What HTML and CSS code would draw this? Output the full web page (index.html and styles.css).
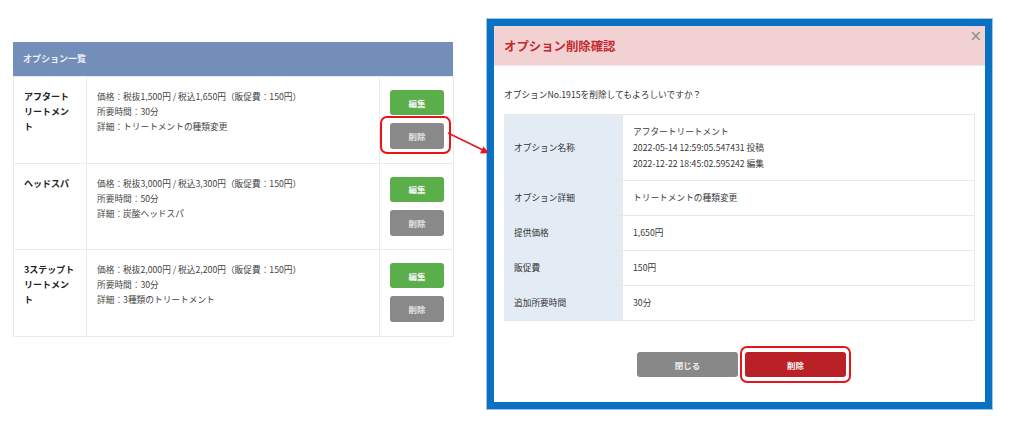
FILE: index.html
```html
<!DOCTYPE html>
<html lang="ja">
<head>
    <meta charset="UTF-8">
    <meta name="viewport" content="width=device-width, initial-scale=1.0">
    <title>オプション削除確認</title>
    <link rel="stylesheet" href="styles.css">
</head>
<body>
    <div class="page">
        <section class="option-list">
            <div class="list-head">オプション一覧</div>
            <table class="list-table">
                <tr>
                    <th class="col-name">アフタートリートメント</th>
                    <td class="col-detail">
                        価格：税抜1,500円 / 税込1,650円（販促費：150円）<br>
                        所要時間：30分<br>
                        詳細：トリートメントの種類変更
                    </td>
                    <td class="col-action">
                        <button class="btn btn-edit">編集</button>
                        <button class="btn btn-delete marked-left">削除</button>
                    </td>
                </tr>
                <tr>
                    <th class="col-name">ヘッドスパ</th>
                    <td class="col-detail">
                        価格：税抜3,000円 / 税込3,300円（販促費：150円）<br>
                        所要時間：50分<br>
                        詳細：炭酸ヘッドスパ
                    </td>
                    <td class="col-action">
                        <button class="btn btn-edit">編集</button>
                        <button class="btn btn-delete">削除</button>
                    </td>
                </tr>
                <tr>
                    <th class="col-name">3ステップトリートメント</th>
                    <td class="col-detail">
                        価格：税抜2,000円 / 税込2,200円（販促費：150円）<br>
                        所要時間：30分<br>
                        詳細：3種類のトリートメント
                    </td>
                    <td class="col-action">
                        <button class="btn btn-edit">編集</button>
                        <button class="btn btn-delete">削除</button>
                    </td>
                </tr>
            </table>
        </section>

        <div class="modal">
            <div class="modal-inner">
                <div class="modal-head">
                    <h2>オプション削除確認</h2>
                    <span class="modal-close">&times;</span>
                </div>
                <div class="modal-body">
                    <p class="confirm-text">オプションNo.1915を削除してもよろしいですか？</p>
                    <table class="detail-table">
                        <tr class="row-tall">
                            <th>オプション名称</th>
                            <td>
                                アフタートリートメント<br>
                                2022-05-14 12:59:05.547431 投稿<br>
                                2022-12-22 18:45:02.595242 編集
                            </td>
                        </tr>
                        <tr>
                            <th>オプション詳細</th>
                            <td>トリートメントの種類変更</td>
                        </tr>
                        <tr>
                            <th>提供価格</th>
                            <td>1,650円</td>
                        </tr>
                        <tr>
                            <th>販促費</th>
                            <td>150円</td>
                        </tr>
                        <tr>
                            <th>追加所要時間</th>
                            <td>30分</td>
                        </tr>
                    </table>
                </div>
                <div class="modal-foot">
                    <button class="btn btn-close">閉じる</button>
                    <button class="btn btn-danger marked">削除</button>
                </div>
            </div>
        </div>

        <!-- annotation arrow from the list button to the dialog -->
        <svg class="arrow" width="50" height="30" viewBox="0 0 50 30">
            <line x1="2" y1="4" x2="38" y2="21.5" stroke="#e8141c" stroke-width="1.6"/>
            <polygon points="43,24 34,24.6 37.4,17.6" fill="#e8141c"/>
        </svg>
    </div>
</body>
</html>
```

FILE: styles.css
```css
body {
    margin: 0;
    font-family: "Noto Sans CJK JP", "Noto Sans", sans-serif;
    font-size: 8.7px;
    color: #333;
    background: #fff;
}
.page {
    position: relative;
    display: flex;
    align-items: flex-start;
    padding: 19px 0 0 13px;
    height: 414px;
}
.option-list {
    width: 440px;
    margin-top: 23px;
}
.list-head {
    background: #748eba;
    color: #eef1f7;
    font-weight: bold;
    font-size: 9px;
    height: 34px;
    line-height: 34px;
    padding-left: 10px;
}
.list-table {
    width: 440px;
    border-collapse: collapse;
    table-layout: fixed;
}
.list-table tr {
    height: 86.5px;
}
.list-table th,
.list-table td {
    border: 1px solid #ebebeb;
    vertical-align: top;
    text-align: left;
    padding: 12px 10px 0;
    line-height: 15px;
}
.list-table .col-name {
    width: 73px;
    font-weight: bold;
    font-size: 9px;
    color: #222;
    box-sizing: border-box;
}
.list-table .col-detail {
    width: 293px;
    box-sizing: border-box;
    color: #444;
}
.list-table .col-action {
    width: 74px;
    box-sizing: border-box;
    padding-top: 13px;
}
.btn {
    display: block;
    border: none;
    border-radius: 3px;
    color: #f4f4f4;
    font-family: inherit;
    font-weight: bold;
    font-size: 8.5px;
    padding: 0;
    cursor: pointer;
}
.col-action .btn {
    width: 54px;
    height: 25px;
}
.col-action .btn + .btn {
    margin-top: 8px;
    height: 26px;
}
.btn-edit {
    background: #5aaf4a;
}
.btn-delete {
    background: #898989;
    color: #e4e4e4;
}
.marked-left,
.marked {
    position: relative;
}
.marked-left::after {
    content: "";
    position: absolute;
    top: -7px;
    right: -7px;
    bottom: -5px;
    left: -10px;
    border: 2.5px solid #e8141c;
    border-radius: 7px;
}
.marked::after {
    content: "";
    position: absolute;
    top: -6px;
    right: -5px;
    bottom: -6px;
    left: -5px;
    border: 2.5px solid #e8141c;
    border-radius: 7px;
}
.modal {
    margin-left: 34px;
    border: 7px solid #0a70c2;
    box-shadow: 0 0 0 1px #9fc4e8;
}
.modal-inner {
    position: relative;
    width: 491px;
    height: 376px;
    background: #fff;
}
.modal-head {
    height: 40px;
    background: #f2d1d3;
    border-bottom: 1px solid #ececec;
    box-sizing: border-box;
    display: flex;
    align-items: center;
    padding-left: 10px;
}
.modal-head h2 {
    margin: 0;
    font-size: 12.4px;
    font-weight: bold;
    color: #c4282e;
}
.modal-close {
    position: absolute;
    top: 1px;
    right: 3px;
    font-family: "DejaVu Sans", sans-serif;
    font-size: 15px;
    color: #8c8c8c;
}
.modal-body {
    padding: 0 10px;
}
.confirm-text {
    margin: 0;
    padding-top: 20px;
    height: 28px;
    line-height: 17px;
    color: #333;
}
.detail-table {
    width: 471px;
    border-collapse: collapse;
    table-layout: fixed;
}
.detail-table tr {
    height: 35px;
}
.detail-table tr.row-tall {
    height: 66px;
}
.detail-table th,
.detail-table td {
    border: 1px solid #e8e8e8;
    text-align: left;
    vertical-align: middle;
    font-weight: normal;
    line-height: 16px;
}
.detail-table th {
    width: 118px;
    box-sizing: border-box;
    background: #e3ecf5;
    padding-left: 9px;
    color: #333;
}
.detail-table td {
    padding-left: 10px;
    color: #3a3a3a;
}
.modal-foot {
    display: flex;
    justify-content: center;
    gap: 7px;
    padding: 31px 0 0 4px;
}
.modal-foot .btn {
    width: 101px;
    height: 25px;
}
.btn-close {
    background: #888;
    color: #eee;
}
.btn-danger {
    background: #b92126;
}
.arrow {
    position: absolute;
    left: 446px;
    top: 129px;
}
```
